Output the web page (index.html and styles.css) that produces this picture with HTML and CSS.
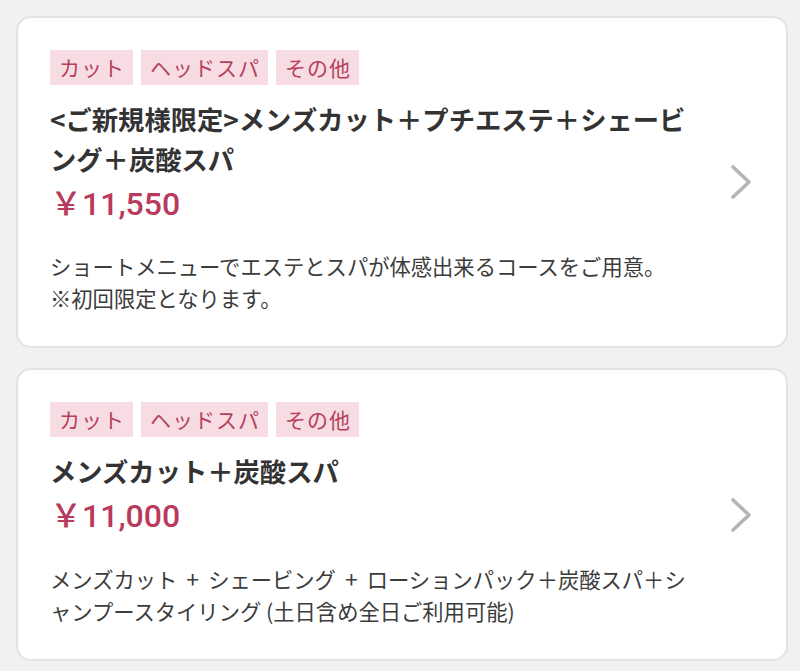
FILE: index.html
```html
<!DOCTYPE html>
<html lang="ja">
<head>
<meta charset="utf-8">
<title>メニュー</title>
<link rel="stylesheet" href="styles.css">
</head>
<body>
<main class="menu-list">
  <a class="menu-card" href="#">
    <div class="menu-body">
      <ul class="tags">
        <li class="tag">カット</li>
        <li class="tag">ヘッドスパ</li>
        <li class="tag">その他</li>
      </ul>
      <h2 class="menu-title">&lt;ご新規様限定&gt;メンズカット＋プチエステ＋シェービ<br>ング＋炭酸スパ</h2>
      <p class="menu-price">￥11,550</p>
      <p class="menu-desc">ショートメニューでエステとスパが体感出来るコースをご用意。<br>※初回限定となります。</p>
    </div>
    <svg class="chevron" width="22" height="36" viewBox="0 0 22 36" aria-hidden="true">
      <polyline points="3,3 19,18 3,33" fill="none" stroke="#b4b4b4" stroke-width="3.6" stroke-linecap="round" stroke-linejoin="round"/>
    </svg>
  </a>
  <a class="menu-card" href="#">
    <div class="menu-body">
      <ul class="tags">
        <li class="tag">カット</li>
        <li class="tag">ヘッドスパ</li>
        <li class="tag">その他</li>
      </ul>
      <h2 class="menu-title">メンズカット＋炭酸スパ</h2>
      <p class="menu-price">￥11,000</p>
      <p class="menu-desc">メンズカット<span class="plus">+</span>シェービング<span class="plus">+</span>ローションパック＋炭酸スパ＋シ<br>ャンプースタイリング (土日含め全日ご利用可能)</p>
    </div>
    <svg class="chevron" width="22" height="36" viewBox="0 0 22 36" aria-hidden="true">
      <polyline points="3,3 19,18 3,33" fill="none" stroke="#b4b4b4" stroke-width="3.6" stroke-linecap="round" stroke-linejoin="round"/>
    </svg>
  </a>
</main>
</body>
</html>
```

FILE: styles.css
```css
html, body {
  margin: 0;
  padding: 0;
}

body {
  background: #f2f1ef;
  font-family: "Noto Sans CJK JP", "Noto Sans", sans-serif;
  color: #333333;
}

.menu-list {
  display: flex;
  flex-direction: column;
  gap: 20px;
  padding: 16px 12px 16px 16px;
}

.menu-card {
  display: flex;
  align-items: center;
  gap: 30px;
  background: #ffffff;
  border: 2px solid #e3e3e3;
  border-radius: 15px;
  padding: 32px 34px 32px 32px;
  text-decoration: none;
  color: inherit;
}

.menu-body {
  flex: 1;
  min-width: 0;
}

.tags {
  display: flex;
  gap: 8px;
  list-style: none;
  margin: 0;
  padding: 0;
}

.tag {
  background: #f7dde3;
  color: #b5405e;
  font-size: 21px;
  line-height: 35px;
  height: 35px;
  letter-spacing: 1px;
  padding: 0 8px 0 9px;
}

.menu-title {
  margin: 14px 0 0;
  font-size: 26.3px;
  line-height: 40px;
  font-weight: 700;
  color: #333333;
  white-space: nowrap;
}

.menu-price {
  margin: 3px 0 0;
  font-family: Roboto, "Noto Sans CJK JP", sans-serif;
  font-size: 32px;
  line-height: 44px;
  font-weight: 500;
  color: #b93a5b;
}

.menu-desc {
  margin: 24px 0 0;
  font-size: 21.3px;
  line-height: 32px;
  color: #3c3c3c;
  white-space: nowrap;
}

.plus {
  padding: 0 9px;
  font-size: 23px;
}

.chevron {
  flex: none;
  display: block;
}
```
